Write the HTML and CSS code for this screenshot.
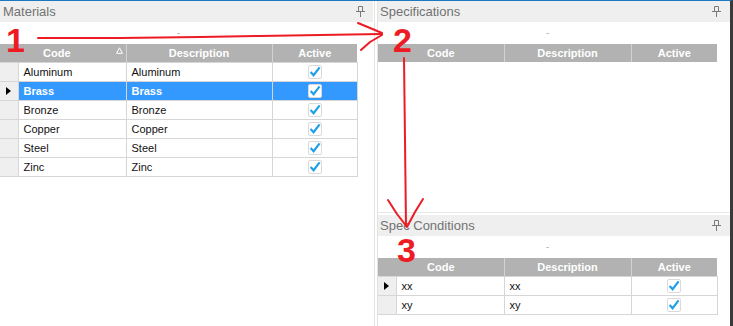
FILE: index.html
```html
<!DOCTYPE html>
<html lang="en">
<head>
  <meta charset="UTF-8" />
  <title>Materials and Specifications</title>
  <link rel="stylesheet" href="styles.css">
</head>
<body>

<div class="window">

  <!-- Materials -->
  <section class="panel panel-left">
    <div class="panel-title">
      <span>Materials</span>
      <svg class="pin" width="9" height="11" viewBox="0 0 9 11"><path d="M2.5 0.5h4v5h-4z M0 5.5h9 M4.5 6v5" fill="none" stroke="#7a7a7a" stroke-width="1"/></svg>
    </div>
    <div class="group-hint">-</div>
    <table class="grid grid-materials">
      <colgroup><col class="c-ind"><col class="c-code"><col class="c-desc-l"><col class="c-act"></colgroup>
      <thead>
        <tr>
          <th colspan="2" class="sorted">Code <svg class="sort" width="7" height="7" viewBox="0 0 7 7"><path d="M3.5 0.8L6.4 6.3H0.6Z" fill="none" stroke="#fff" stroke-width="1"/></svg></th>
          <th>Description</th>
          <th>Active</th>
        </tr>
      </thead>
      <tbody>
        <tr><td class="ind"></td><td>Aluminum</td><td>Aluminum</td><td class="act"><span class="check"></span></td></tr>
        <tr class="selected"><td class="ind"><span class="arrow"></span></td><td>Brass</td><td>Brass</td><td class="act"><span class="check"></span></td></tr>
        <tr><td class="ind"></td><td>Bronze</td><td>Bronze</td><td class="act"><span class="check"></span></td></tr>
        <tr><td class="ind"></td><td>Copper</td><td>Copper</td><td class="act"><span class="check"></span></td></tr>
        <tr><td class="ind"></td><td>Steel</td><td>Steel</td><td class="act"><span class="check"></span></td></tr>
        <tr><td class="ind"></td><td>Zinc</td><td>Zinc</td><td class="act"><span class="check"></span></td></tr>
      </tbody>
    </table>
  </section>

  <div class="v-splitter"></div>

  <div class="right-col">
    <!-- Specifications -->
    <section class="panel panel-spec">
      <div class="panel-title">
        <span>Specifications</span>
        <svg class="pin" width="9" height="11" viewBox="0 0 9 11"><path d="M2.5 0.5h4v5h-4z M0 5.5h9 M4.5 6v5" fill="none" stroke="#7a7a7a" stroke-width="1"/></svg>
      </div>
      <div class="group-hint">-</div>
      <table class="grid grid-right">
        <colgroup><col class="c-ind"><col class="c-code"><col class="c-desc-r"><col class="c-act-r"></colgroup>
        <thead>
          <tr><th colspan="2">Code</th><th>Description</th><th>Active</th></tr>
        </thead>
      </table>
    </section>

    <div class="h-splitter"></div>

    <!-- Spec Conditions -->
    <section class="panel panel-cond">
      <div class="panel-title">
        <span>Spec Conditions</span>
        <svg class="pin" width="9" height="11" viewBox="0 0 9 11"><path d="M2.5 0.5h4v5h-4z M0 5.5h9 M4.5 6v5" fill="none" stroke="#7a7a7a" stroke-width="1"/></svg>
      </div>
      <div class="group-hint">-</div>
      <table class="grid grid-right">
        <colgroup><col class="c-ind"><col class="c-code"><col class="c-desc-r"><col class="c-act-r"></colgroup>
        <thead>
          <tr><th colspan="2">Code</th><th>Description</th><th>Active</th></tr>
        </thead>
        <tbody>
          <tr><td class="ind"><span class="arrow"></span></td><td>xx</td><td>xx</td><td class="act"><span class="check"></span></td></tr>
          <tr><td class="ind"></td><td>xy</td><td>xy</td><td class="act"><span class="check"></span></td></tr>
        </tbody>
      </table>
    </section>
  </div>

  <!-- red hand-drawn annotations -->
  <svg class="annotations" width="733" height="326" viewBox="0 0 733 326">
    <g fill="none" stroke="#ed1c24" stroke-width="2" stroke-linecap="round" stroke-linejoin="round">
      <path d="M38 38 L120 38 L200 37 L260 36 L320 35 L382 34"/>
      <path d="M358 23 L382 33"/>
      <path d="M382 35 L370 42 L361 50"/>
      <path d="M404 58 L405 140 L406 226"/>
      <path d="M388 200 L397 214 L407 227 L415 212 L423 199"/>
    </g>
    <g class="marks">
      <text x="6" y="52">1</text>
      <text x="393" y="52">2</text>
      <text x="397" y="262">3</text>
    </g>
  </svg>
</div>

</body>
</html>
```

FILE: styles.css
```css
body {
  margin: 0;
  font-family: 'Liberation Sans', Arial, sans-serif;
  background: #fff;
}

.window {
  position: relative;
  width: 730px;
  height: 325px;
  display: flex;
  border-top: 1px solid #1b78c2;
  border-right: 3px solid #3a3a3a;
  overflow: hidden;
}

.panel {
  display: flex;
  flex-direction: column;
  background: #fff;
}

.panel-left {
  width: 373px;
}

.v-splitter {
  width: 4px;
  background: #fff;
  box-shadow: inset -2px 0 0 #fff, inset -3px 0 0 #e4e4e4;
}

.right-col {
  flex: 1;
  display: flex;
  flex-direction: column;
  border-left: 1px solid #e3e3e3;
}

.panel-spec {
  height: 211px;
}

.h-splitter {
  height: 3px;
  border-top: 1px solid #e8e8e8;
  box-sizing: border-box;
}

.panel-cond {
  flex: 1;
}

.panel-title {
  height: 21px;
  background: #efefef;
  display: flex;
  align-items: center;
  justify-content: space-between;
  padding: 0 8px 0 3px;
  font-size: 13px;
  color: #727272;
}

.panel-spec .panel-title,
.panel-cond .panel-title {
  padding-left: 2px;
  padding-right: 9px;
}

.pin {
  display: block;
}

.group-hint {
  height: 22px;
  line-height: 22px;
  font-size: 9px;
  color: #9a9a9a;
  text-align: center;
  width: 357px;
}

.panel-spec .group-hint,
.panel-cond .group-hint {
  width: 339px;
}

.grid {
  border-collapse: collapse;
  table-layout: fixed;
  font-size: 11px;
  color: #111;
}

.grid-materials {
  width: 357px;
}

.grid-right {
  width: 339px;
}

.c-ind { width: 18px; }
.c-code { width: 108px; }
.c-desc-l { width: 146px; }
.c-desc-r { width: 127px; }
.c-act { width: 85px; }
.c-act-r { width: 86px; }

.grid th {
  height: 18px;
  padding: 0;
  background: #b2b2b2;
  color: #fff;
  font-weight: bold;
  text-align: center;
  border-left: 1px solid #d2d2d2;
  position: relative;
}

.grid th:first-child {
  border-left: none;
}

.grid th.sorted {
  padding-right: 12px;
}

.sort {
  position: absolute;
  right: 3px;
  top: 3px;
}

.grid td {
  height: 18px;
  padding: 0 5px;
  border: 1px solid #d6d6d6;
  white-space: nowrap;
  overflow: hidden;
}

.grid td.ind {
  padding: 0;
  background: #efefef;
  border-left: none;
}

.grid td.act {
  text-align: center;
  padding: 0;
}

.grid tr.selected td {
  background: #3399ff;
  color: #fff;
  font-weight: bold;
}

.grid tr.selected td.ind {
  background: #efefef;
}

.arrow {
  display: block;
  width: 0;
  height: 0;
  margin-left: 6px;
  border-left: 5px solid #000;
  border-top: 4px solid transparent;
  border-bottom: 4px solid transparent;
}

.check {
  display: inline-block;
  vertical-align: middle;
  width: 14px;
  height: 14px;
  box-sizing: border-box;
  border: 1px solid #dadada;
  border-radius: 2px;
  background: #fff url("data:image/svg+xml,%3Csvg xmlns='http://www.w3.org/2000/svg' width='14' height='14'%3E%3Cpath d='M2.6 7 L5.6 10.2 L11.6 2.4' fill='none' stroke='%2320a0e8' stroke-width='2.2'/%3E%3C/svg%3E") center / 14px 14px no-repeat;
  margin-top: -1px;
}

.annotations {
  position: absolute;
  left: 0;
  top: -1px;
  pointer-events: none;
}

.marks text {
  font-family: 'Liberation Sans', Arial, sans-serif;
  font-weight: bold;
  font-size: 34px;
  fill: #ed1c24;
}
```
